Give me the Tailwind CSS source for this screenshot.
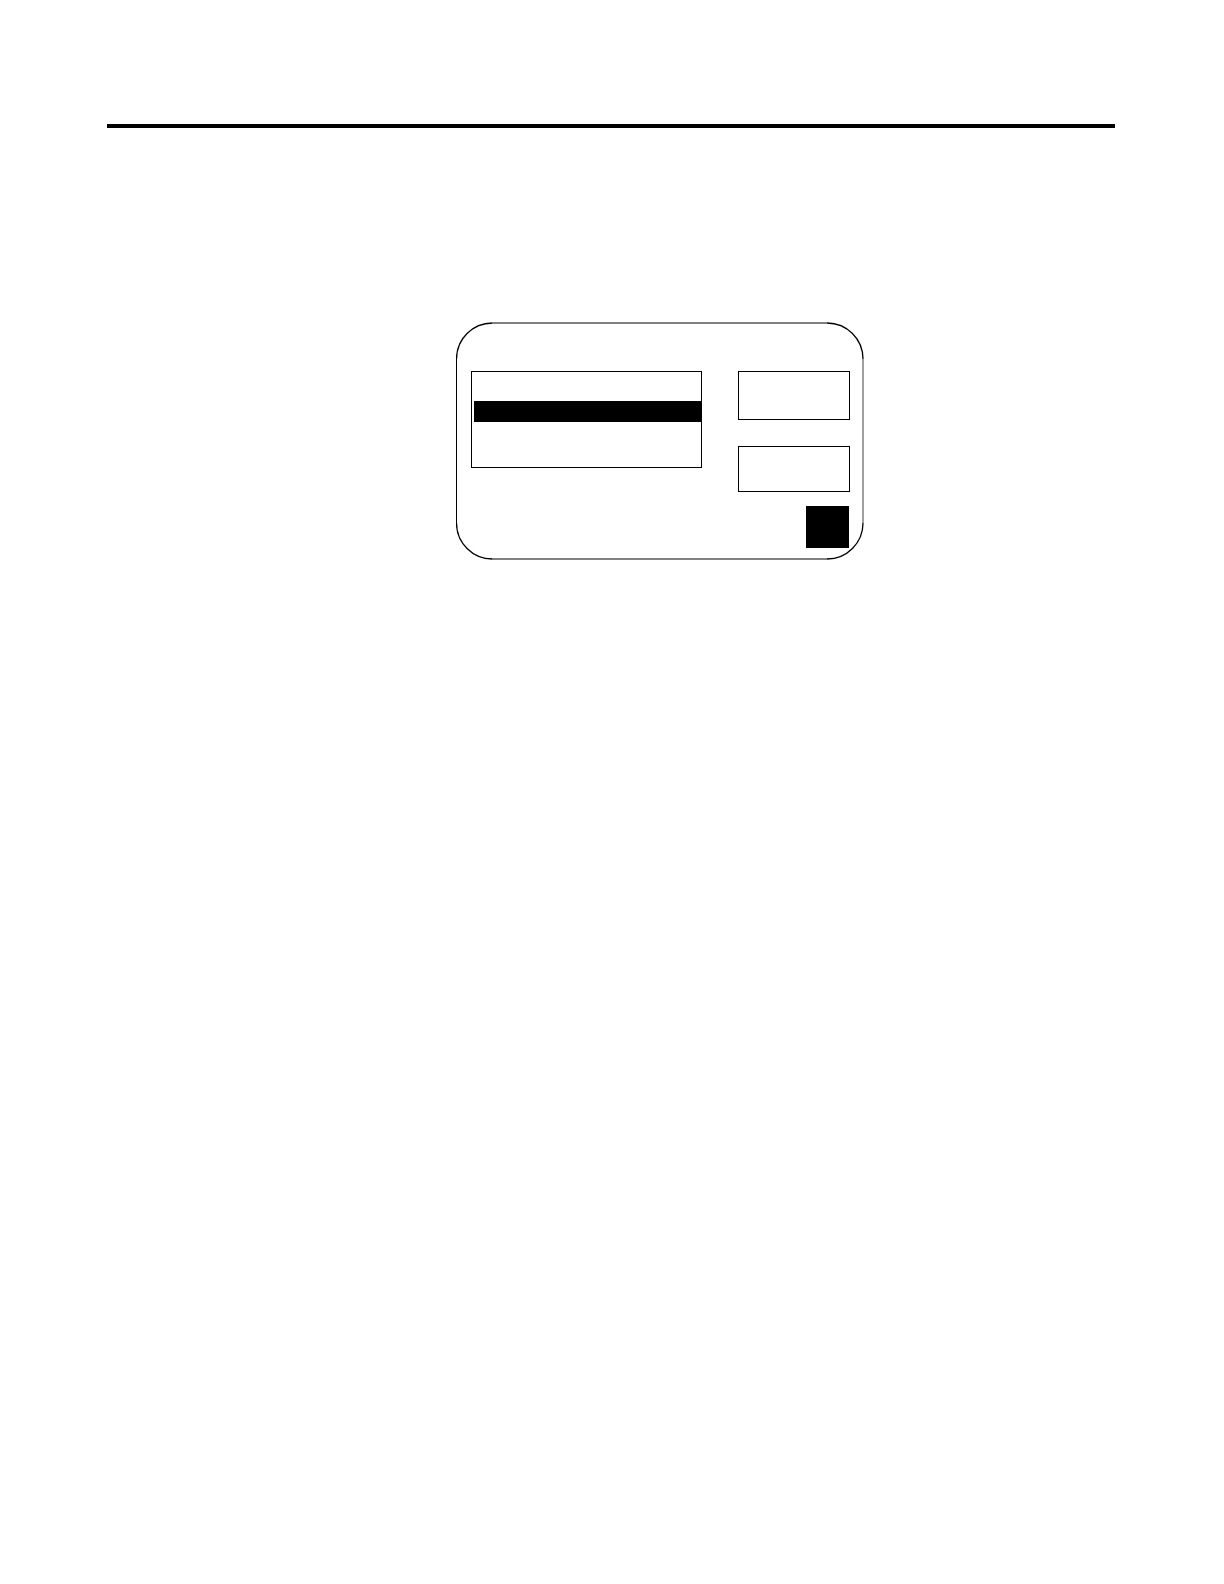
<!DOCTYPE html>
<html lang="en">
<head>
    <meta charset="UTF-8">
    <meta name="viewport" content="width=device-width, initial-scale=1.0">
    <title>Display Panel</title>
    <script src="https://cdn.jsdelivr.net/npm/@tailwindcss/browser@4"></script>
</head>
<body class="bg-white font-['Liberation_Sans',sans-serif] text-black">

    <div class="min-h-screen pt-[124px] pr-[109px] pl-[107px]">

        <!-- Header rule -->
        <header>
            <hr class="border-t-4 border-black">
        </header>

        <main class="pt-[194px] pl-[349px]">

            <!-- Display -->
            <section aria-label="Display" class="relative flex w-[408px] gap-9 pt-[49px] pr-[14px] pb-3 pl-[15px]">

                <!-- Rounded outline: corners, then sides -->
                <svg class="pointer-events-none absolute inset-0 h-full w-full" viewBox="0 0 408 238" fill="none" stroke="#000" aria-hidden="true">
                    <path stroke-width="1.3" d="M0.5 37A36 36 0 0 1 36.5 1M371 1A36 36 0 0 1 407 37M407 201A36 36 0 0 1 371 237M36.5 237A36 36 0 0 1 0.5 201" />
                    <path d="M0.5 37V201M36.5 1H371M36.5 237H371" />
                    <path stroke="#a0a0a0" stroke-width="2" d="M407 37V201" />
                </svg>

                <!-- List -->
                <ul role="listbox" aria-label="Items" class="flex h-[97px] flex-1 flex-col border border-black pl-[2px]">
                    <li role="option" aria-selected="false" class="h-[29px]"></li>
                    <li role="option" aria-selected="true" class="h-[21px] bg-black"></li>
                    <li role="option" aria-selected="false" class="flex-1"></li>
                </ul>

                <!-- Buttons -->
                <div class="flex w-28 flex-col">
                    <button type="button" aria-label="Upper button" class="h-[49px] border border-black"></button>
                    <button type="button" aria-label="Lower button" class="mt-[26px] h-[46px] border border-black"></button>
                    <button type="button" aria-label="Enter" class="mt-[14px] mr-px h-[42px] w-[43px] self-end bg-black"></button>
                </div>
            </section>
        </main>
    </div>

</body>
</html>
